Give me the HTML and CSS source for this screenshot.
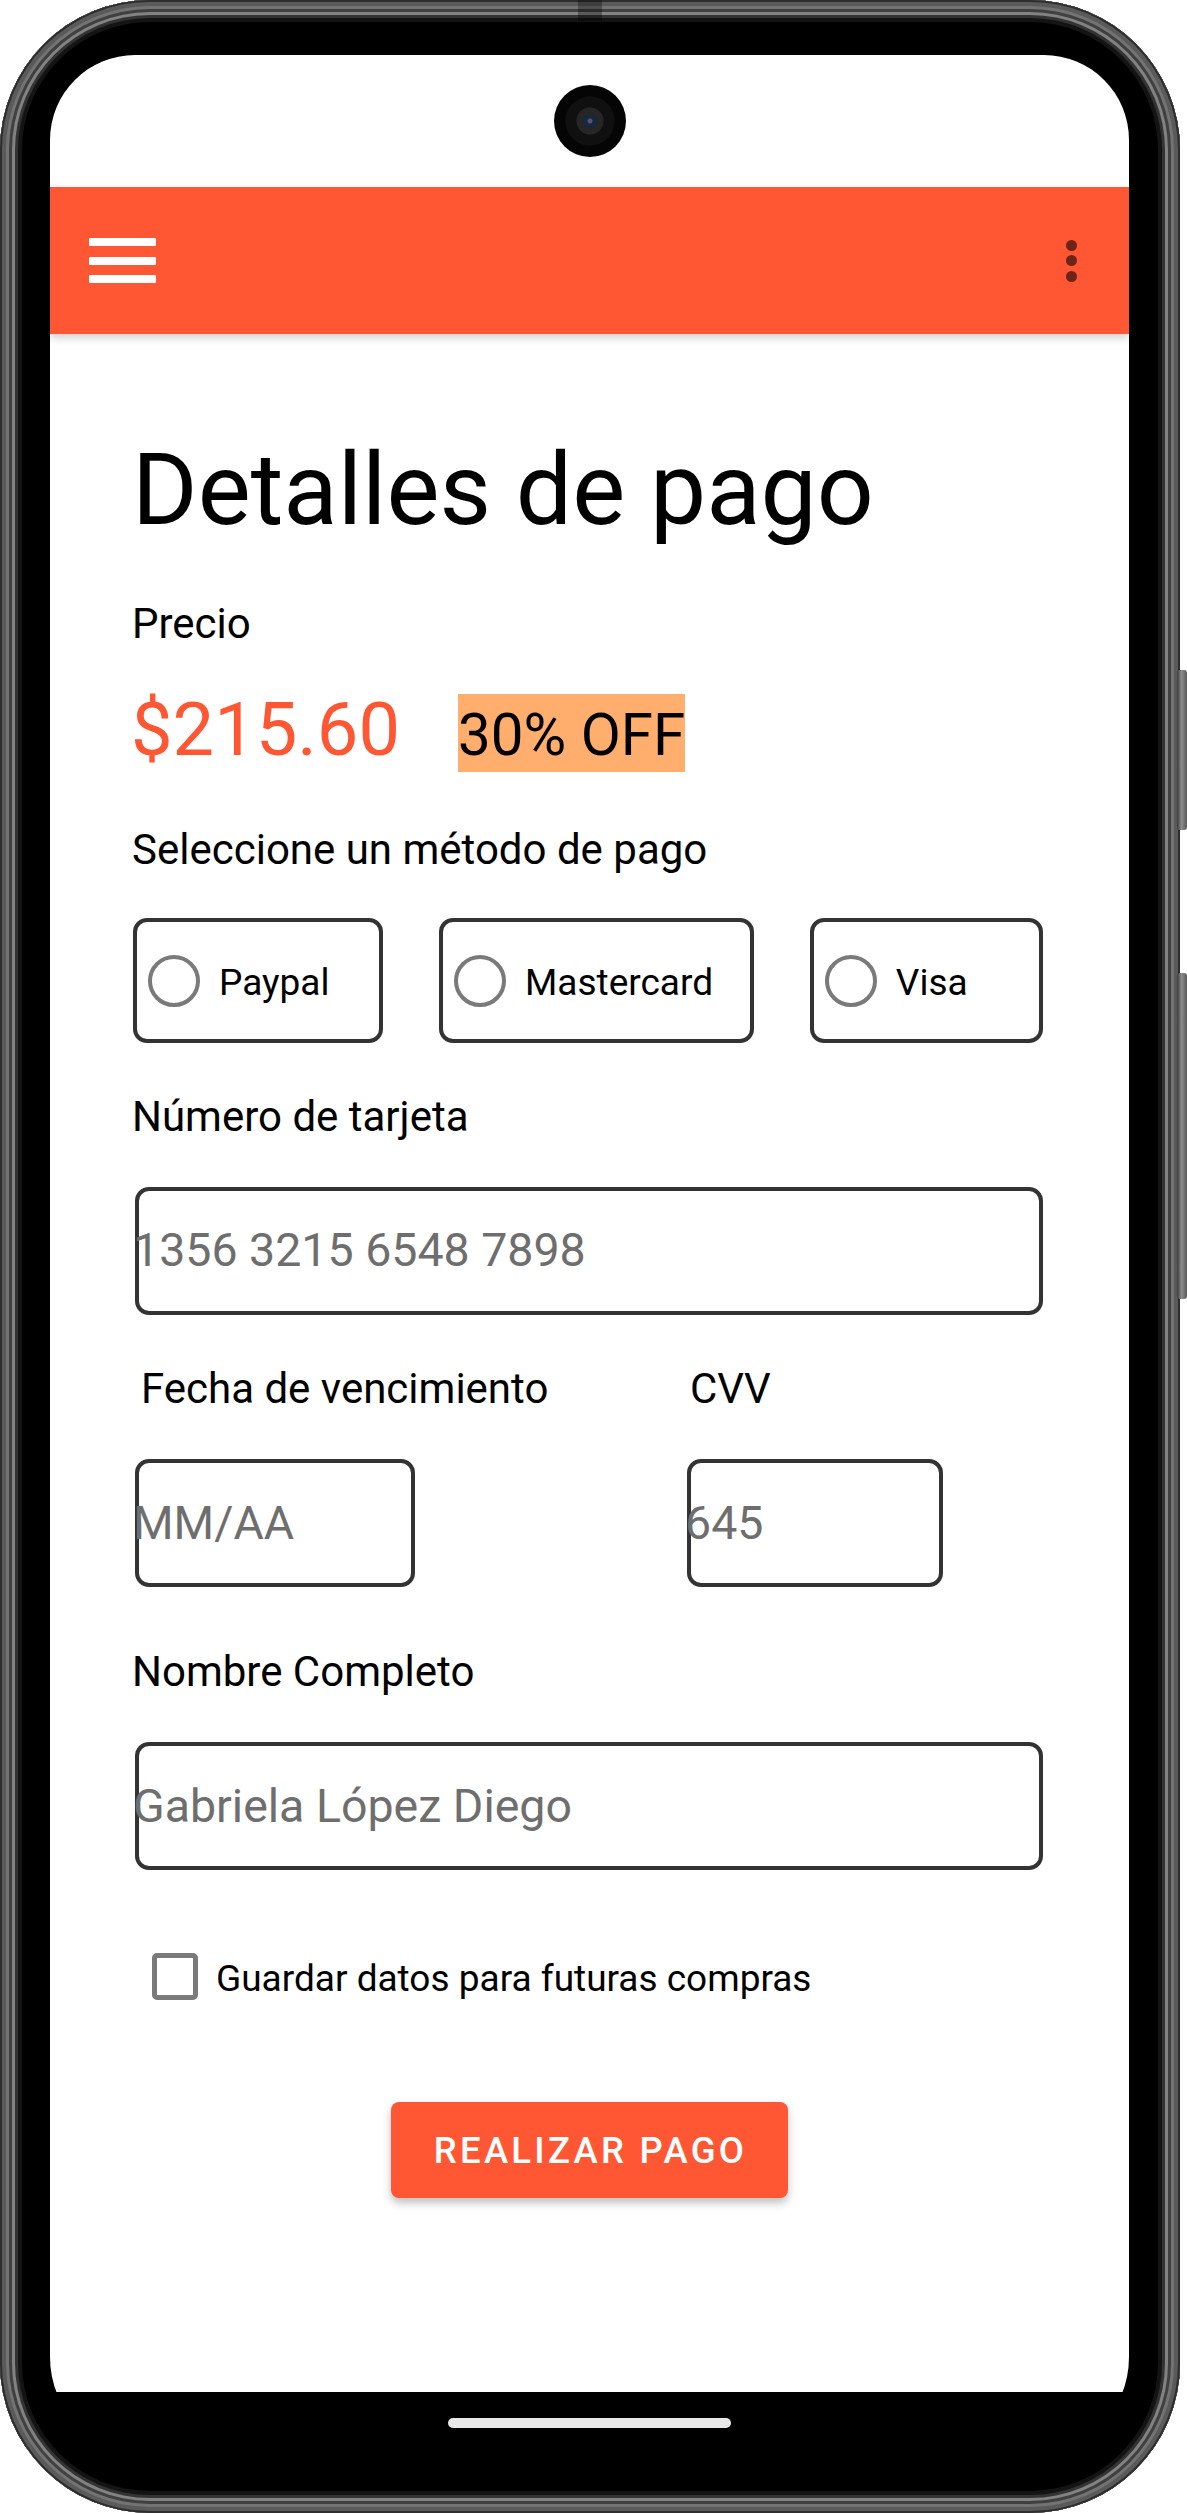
FILE: index.html
```html
<!DOCTYPE html>
<html lang="es">
<head>
<meta charset="utf-8">
<title>Detalles de pago</title>
<link rel="stylesheet" href="styles.css">
</head>
<body>
<div class="device">
  <div class="phone">
    <span class="antenna"></span>
    <div class="screen">
      <div class="app">
        <div class="statusbar"><span class="camera"></span></div>
        <header class="appbar">
          <span class="hamburger"><i></i><i></i><i></i></span>
          <span class="kebab"><i></i><i></i><i></i></span>
        </header>
        <main class="content">
          <h1 class="title">Detalles de pago</h1>
          <p class="label label-precio">Precio</p>
          <div class="price-row">
            <span class="price">$215.60</span>
            <span class="badge">30% OFF</span>
          </div>
          <p class="label label-select">Seleccione un método de pago</p>
          <div class="methods">
            <div class="method method-paypal"><span class="radio"></span><span class="method-text">Paypal</span></div>
            <div class="method method-master"><span class="radio"></span><span class="method-text">Mastercard</span></div>
            <div class="method method-visa"><span class="radio"></span><span class="method-text">Visa</span></div>
          </div>
          <p class="label label-card">Número de tarjeta</p>
          <div class="field field-card"><span class="placeholder">1356 3215 6548 7898</span></div>
          <div class="expiry">
            <p class="label label-fecha">Fecha de vencimiento</p>
            <p class="label label-cvv">CVV</p>
            <div class="field field-date"><span class="placeholder">MM/AA</span></div>
            <div class="field field-cvv"><span class="placeholder">645</span></div>
          </div>
          <p class="label label-name">Nombre Completo</p>
          <div class="field field-name"><span class="placeholder">Gabriela López Diego</span></div>
          <div class="save-row"><span class="checkbox"></span><span class="save-text">Guardar datos para futuras compras</span></div>
          <div class="actions"><button class="pay-btn" type="button">REALIZAR PAGO</button></div>
        </main>
      </div>
      <div class="navbar"><span class="home-indicator"></span></div>
    </div>
  </div>
  <span class="side-btn side-btn-1"></span>
  <span class="side-btn side-btn-2"></span>
</div>
</body>
</html>
```

FILE: styles.css
```css
* { box-sizing: border-box; }

html, body {
  margin: 0;
  padding: 0;
  background: #ffffff;
}

body {
  font-family: Roboto, "Noto Sans", "Liberation Sans", Arial, sans-serif;
  color: #000000;
}

.device {
  position: relative;
  width: 1187px;
  height: 2513px;
}

.phone {
  position: relative;
  width: 1180px;
  height: 2513px;
  border-radius: 150px;
  background: #000000;
  padding: 55px 51px 0 50px;
  box-shadow:
    inset 0 0 0 2px #2e2e2e,
    inset 0 0 0 6px #5a5a5a,
    inset 0 0 0 9px #737373,
    inset 0 0 0 12px #404040,
    inset 0 0 0 15px #828282,
    inset 0 0 0 18px #333333,
    inset 0 0 0 22px #141414;
}

.antenna {
  position: absolute;
  left: 578px;
  top: 0;
  width: 24px;
  height: 21px;
  background: rgba(0, 0, 0, 0.3);
}

.screen {
  width: 1079px;
  height: 2402px;
  border-radius: 85px 85px 100px 100px;
  overflow: hidden;
  display: flex;
  flex-direction: column;
  background: #000000;
}

.app {
  flex: 1;
  background: #ffffff;
  display: flex;
  flex-direction: column;
}

.statusbar {
  height: 132px;
  display: flex;
  align-items: center;
  justify-content: center;
}

.camera {
  width: 72px;
  height: 72px;
  border-radius: 50%;
  background: radial-gradient(circle at 50% 50%,
    #5a4f74 0 2px,
    #16283a 3px 7px,
    #262626 8px 13px,
    #101010 14px 24px,
    #050505 25px);
}

.appbar {
  position: relative;
  z-index: 2;
  height: 147px;
  background: #ff5733;
  display: flex;
  align-items: center;
  justify-content: space-between;
  padding: 0 52px 0 39px;
  box-shadow: 0 4px 8px rgba(0, 0, 0, 0.18);
}

.hamburger {
  display: flex;
  flex-direction: column;
  gap: 10.5px;
  width: 67px;
}

.hamburger i {
  display: block;
  height: 8px;
  background: #ffffff;
  border-radius: 1px;
}

.kebab {
  display: flex;
  flex-direction: column;
  gap: 4.5px;
}

.kebab i {
  display: block;
  width: 11px;
  height: 11px;
  border-radius: 50%;
  background: #6b2415;
}

.content {
  flex: 1;
  padding: 97px 86px 0 85px;
}

.title {
  margin: 0 0 0 -3px;
  font-size: 100px;
  font-weight: 400;
  line-height: 1.172;
}

.label {
  margin: 0 0 0 -3px;
  font-size: 42px;
  line-height: 1.172;
}

.label-precio { margin-top: 51px; }

.price-row {
  margin-top: 39px;
  display: flex;
  align-items: baseline;
}

.price {
  margin-left: -4px;
  font-size: 74px;
  line-height: 1.172;
  color: #ff5733;
}

.badge {
  display: inline-block;
  margin-left: 58px;
  padding: 7px 0 2px;
  font-size: 58.3px;
  line-height: 1.172;
  background: #ffae6e;
}

.label-select { margin-top: 51px; }

.methods {
  margin-top: 44px;
  margin-left: -2px;
  display: flex;
  gap: 56px;
}

.method {
  height: 125px;
  border: 4px solid #333333;
  border-radius: 14px;
  display: flex;
  align-items: center;
  gap: 19px;
  padding-left: 11px;
}

.method-paypal { width: 251px; }
.method-master { width: 316px; }
.method-visa { width: 234px; }

.radio {
  flex: none;
  width: 52px;
  height: 52px;
  border: 4.5px solid #7a7a7a;
  border-radius: 50%;
}

.method-text {
  font-size: 37px;
  line-height: 1.172;
  padding-top: 4px;
}

.label-card { margin-top: 49px; }

.field {
  height: 128px;
  border: 4px solid #333333;
  border-radius: 14px;
  display: flex;
  align-items: center;
}

.field-card { margin-top: 45px; }

.placeholder {
  margin-left: -6px;
  font-size: 46.5px;
  line-height: 1.172;
  color: #6e6e6e;
  white-space: nowrap;
}

.expiry {
  margin-top: 49px;
  display: grid;
  grid-template-columns: 552px auto;
  row-gap: 46px;
  align-items: start;
}

.expiry .label { margin: 0; }

.label-fecha { padding-left: 6px; }
.label-cvv { padding-left: 3px; }

.field-date { width: 280px; }
.field-cvv { width: 256px; }

.label-name { margin-top: 60px; }

.field-name { margin-top: 46px; }

.save-row {
  margin-top: 83px;
  display: flex;
  align-items: center;
  gap: 18px;
  padding-left: 17px;
}

.checkbox {
  flex: none;
  width: 46px;
  height: 47px;
  border: 5px solid #7a7a7a;
  border-radius: 5px;
}

.save-text {
  font-size: 37px;
  line-height: 1.172;
  padding-top: 4px;
}

.actions {
  margin-top: 102px;
  display: flex;
  justify-content: center;
}

.pay-btn {
  width: 397px;
  height: 96px;
  border: 0;
  border-radius: 8px;
  background: #ff5733;
  color: #ffffff;
  font-family: Roboto, "Noto Sans", "Liberation Sans", Arial, sans-serif;
  font-size: 36.5px;
  font-weight: 500;
  letter-spacing: 0.09em;
  padding: 0 0 0 3px;
  box-shadow: 0 5px 9px rgba(0, 0, 0, 0.25);
}

.navbar {
  height: 65px;
  background: #000000;
  display: flex;
  justify-content: center;
  padding-top: 26px;
}

.home-indicator {
  width: 283px;
  height: 10px;
  border-radius: 5px;
  background: #e8e8e8;
}

.side-btn {
  position: absolute;
  left: 1177px;
  width: 10px;
  border-radius: 3px;
  background: linear-gradient(90deg, #3a3a3a, #8c8c8c 45%, #5a5a5a);
}

.side-btn-1 { top: 670px; height: 160px; }
.side-btn-2 { top: 973px; height: 326px; }
```
